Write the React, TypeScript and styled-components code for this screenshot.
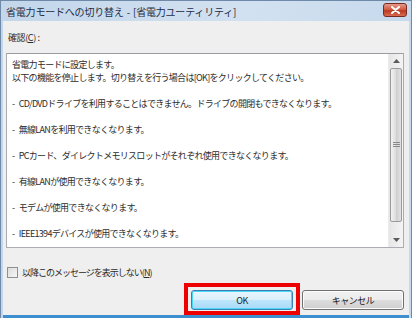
import React from 'react'
import styled, { createGlobalStyle } from 'styled-components'

const GlobalStyle = createGlobalStyle`
  html, body {
    margin: 0;
    padding: 0;
    background: #ffffff;
  }
  body {
    font-family: "Noto Sans CJK JP", "Noto Sans", sans-serif;
  }
`

const Window = styled.div`
  width: 412px;
  height: 318px;
  box-sizing: border-box;
  display: flex;
  flex-direction: column;
  background: linear-gradient(to right, #c3d6ea, #d2e1f1 60%, #c6d9ec);
  border: 1px solid #6f8aa8;
  border-bottom: none;
  overflow: hidden;
`

const TitleBar = styled.div`
  height: 20px;
  flex-shrink: 0;
  display: flex;
  align-items: center;
  justify-content: space-between;
  padding: 0 4px 0 5px;
`

const Title = styled.span`
  font-size: 10px;
  letter-spacing: -0.2px;
  word-spacing: 1px;
  color: #1c2c44;
  white-space: nowrap;
`

const CloseButton = styled.div`
  width: 22px;
  height: 12px;
  margin-top: -2px;
  display: flex;
  align-items: center;
  justify-content: center;
  border: 1px solid #7a2a22;
  border-radius: 3px;
  background: linear-gradient(to bottom, #e49a8a, #d0553e 50%, #b83a22 55%, #d86a50);
`

const Body = styled.div`
  flex: 1;
  display: flex;
  flex-direction: column;
  margin: 0 2px;
  background: #efefef;
  border-bottom: 3px solid #3d8fd0;
  padding: 10px 5px 0 3px;
`

const SectionLabel = styled.div`
  font-size: 9px;
  letter-spacing: -0.4px;
  color: #2a2a2a;
  height: 13px;
  line-height: 13px;
  padding-left: 2px;
  margin-bottom: 9px;
`

const TextBox = styled.div`
  height: 195px;
  flex-shrink: 0;
  box-sizing: border-box;
  display: flex;
  background: #ffffff;
  border: 1px solid #abadb3;
  border-top-color: #9a9ca2;
`

const Message = styled.div`
  flex: 1;
  padding: 4px 5px;
  font-size: 9px;
  letter-spacing: -0.7px;
  word-spacing: 3px;
  line-height: 13px;
  color: #2c2c2c;
  white-space: nowrap;
  overflow: hidden;
`

const Line = styled.div<{ $gap?: boolean }>`
  height: 13px;
  margin-top: ${p => (p.$gap ? '13px' : '0')};
`

const ScrollBar = styled.div`
  width: 14px;
  display: flex;
  flex-direction: column;
  background: linear-gradient(to right, #e6e6e6, #f4f4f4);
  border-left: 1px solid #ececec;
`

const ArrowCell = styled.div`
  height: 14px;
  display: flex;
  align-items: center;
  justify-content: center;
`

const Thumb = styled.div`
  flex: 1;
  margin: 0 1px;
  border: 1px solid #9a9a9a;
  border-radius: 2px;
  background: linear-gradient(to right, #f2f2f2, #dcdcdc 50%, #cfcfcf 55%, #e2e2e2);
  display: flex;
  align-items: center;
  justify-content: center;
`

const Track = styled.div`
  height: 11px;
`

const CheckRow = styled.div`
  height: 13px;
  flex-shrink: 0;
  display: flex;
  align-items: center;
  margin-top: 18px;
  padding-left: 1px;
`

const CheckBox = styled.span`
  display: block;
  width: 9px;
  height: 9px;
  flex-shrink: 0;
  margin-right: 4px;
  border: 1px solid #8e8f8f;
  background: linear-gradient(135deg, #dcdcdc, #f6f6f6);
`

const CheckText = styled.span`
  font-size: 9px;
  letter-spacing: -1px;
  color: #2a2a2a;
  white-space: nowrap;
`

const ButtonRow = styled.div`
  display: flex;
  align-items: center;
  justify-content: flex-end;
  gap: 2px;
  margin-top: 4px;
`

const Highlight = styled.div`
  border: 4px solid #ee0000;
  padding: 3px 3px 1px 3px;
  display: flex;
`

const Button = styled.div<{ $focused?: boolean }>`
  width: 102px;
  height: 20px;
  box-sizing: border-box;
  display: flex;
  align-items: center;
  justify-content: center;
  font-size: 9px;
  letter-spacing: -0.5px;
  color: #1a1a1a;
  border-radius: 3px;
  border: 1px solid ${p => (p.$focused ? '#3c7fb1' : '#707070')};
  background: ${p =>
    p.$focused
      ? 'linear-gradient(to bottom, #eaf6fd, #d9f0fc 50%, #bee6fd 50%, #a7d9f5)'
      : 'linear-gradient(to bottom, #f2f2f2, #ebebeb 50%, #dddddd 50%, #cfcfcf)'};
  box-shadow: inset 0 0 0 1px ${p => (p.$focused ? '#48d8fb' : '#fcfcfc')};
  margin-top: ${p => (p.$focused ? '0' : '2px')};
`

function Arrow({ down }: { down?: boolean }) {
  return (
    <svg width="7" height="4" viewBox="0 0 7 4">
      <path d={down ? 'M0 0 L7 0 L3.5 4 Z' : 'M0 4 L7 4 L3.5 0 Z'} fill="#5a5a5a" />
    </svg>
  )
}

function Grip() {
  return (
    <svg width="7" height="6" viewBox="0 0 7 6">
      <path d="M0 0.5 H7 M0 2.5 H7 M0 4.5 H7" stroke="#8a8a8a" strokeWidth="1" />
    </svg>
  )
}

function CloseX() {
  return (
    <svg width="9" height="8" viewBox="0 0 9 8">
      <path d="M1 1 L8 7 M8 1 L1 7" stroke="#ffffff" strokeWidth="2" strokeLinecap="round" />
    </svg>
  )
}

const lines = [
  'CD/DVDドライブを利用することはできません。ドライブの開閉もできなくなります。',
  '無線LANを利用できなくなります。',
  'PCカード、ダイレクトメモリスロットがそれぞれ使用できなくなります。',
  '有線LANが使用できなくなります。',
  'モデムが使用できなくなります。',
  'IEEE1394デバイスが使用できなくなります。',
]

export default function App() {
  return (
    <>
      <GlobalStyle />
      <Window>
        <TitleBar>
          <Title>省電力モードへの切り替え - [省電力ユーティリティ]</Title>
          <CloseButton>
            <CloseX />
          </CloseButton>
        </TitleBar>
        <Body>
          <SectionLabel>
            確認(<u>C</u>) :
          </SectionLabel>
          <TextBox>
            <Message>
              <Line>省電力モードに設定します。</Line>
              <Line>以下の機能を停止します。切り替えを行う場合は[OK]をクリックしてください。</Line>
              {lines.map(text => (
                <Line key={text} $gap>
                  - {text}
                </Line>
              ))}
            </Message>
            <ScrollBar>
              <ArrowCell>
                <Arrow />
              </ArrowCell>
              <Thumb>
                <Grip />
              </Thumb>
              <Track />
              <ArrowCell>
                <Arrow down />
              </ArrowCell>
            </ScrollBar>
          </TextBox>
          <CheckRow>
            <CheckBox />
            <CheckText>
              以降このメッセージを表示しない(<u>N</u>)
            </CheckText>
          </CheckRow>
          <ButtonRow>
            <Highlight>
              <Button $focused>OK</Button>
            </Highlight>
            <Button>キャンセル</Button>
          </ButtonRow>
        </Body>
      </Window>
    </>
  )
}
